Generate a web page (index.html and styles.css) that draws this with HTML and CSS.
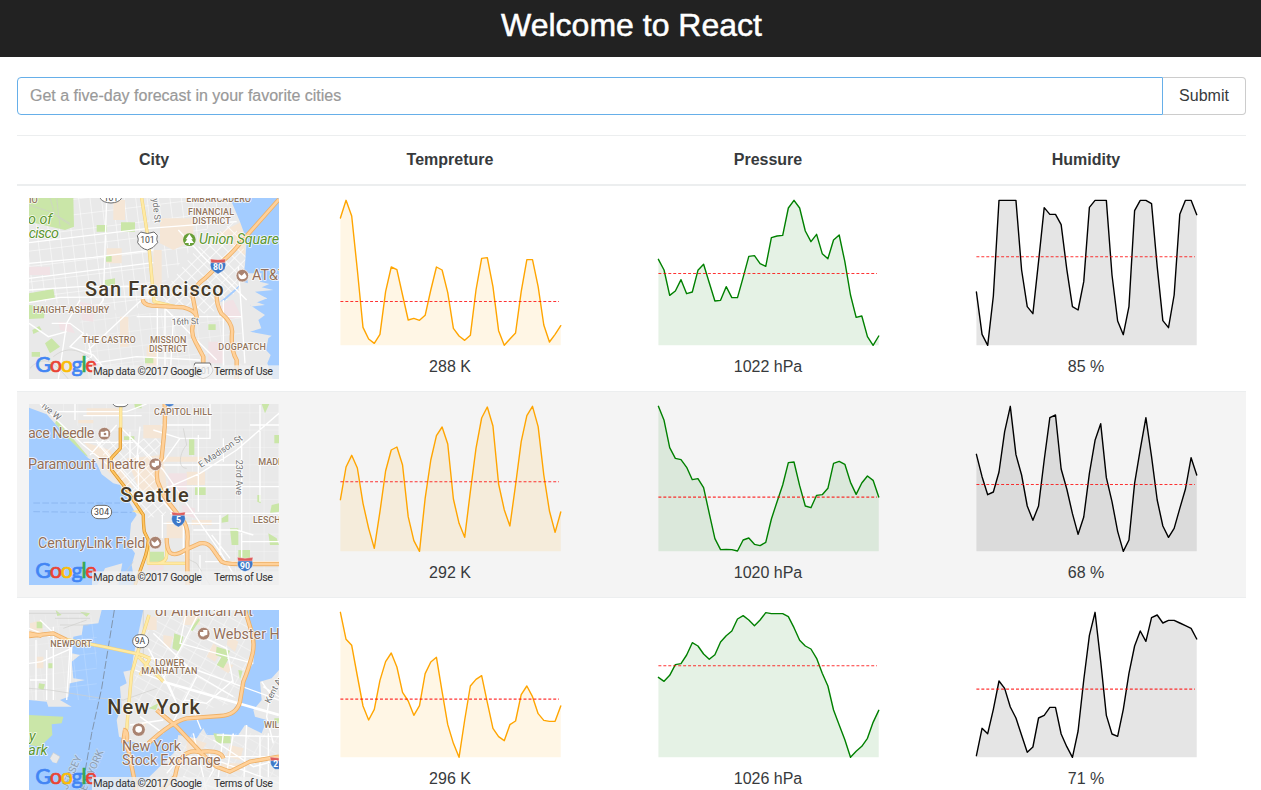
FILE: index.html
```html
<!DOCTYPE html>
<html lang="en">
<head>
<meta charset="utf-8">
<title>Welcome to React</title>
<link rel="stylesheet" href="styles.css">
</head>
<body>
<header class="banner"><h2 class="banner-title">Welcome to React</h2></header>
<main class="content">
<form class="search">
<input class="search-input" type="text" placeholder="Get a five-day forecast in your favorite cities">
<button class="search-button" type="button">Submit</button>
</form>
<section class="table">
<div class="row head"><div>City</div><div>Tempreture</div><div>Pressure</div><div>Humidity</div></div>

<div class="row">
<div class="cell">
<svg class="map" viewBox="27 24 750 543">
<defs>
<pattern id="blocks" width="34" height="46" patternUnits="userSpaceOnUse" patternTransform="rotate(-7)"><path d="M0 0H34M0 0V46" class="street thin"/></pattern>
<pattern id="diag" width="26" height="26" patternUnits="userSpaceOnUse" patternTransform="rotate(45)"><path d="M0 0H26M0 0V26" class="street"/></pattern>
</defs>
<rect x="27" y="24" width="750" height="543" class="land"/>
<path d="M27 24H385L400 330L330 365L27 330Z" fill="url(#blocks)"/>
<path d="M180 370H665V567H180Z" fill="url(#blocks)" opacity=".55"/>
<path d="M395 24H640L560 120L400 320Z" fill="url(#blocks)"/>
<g class="commercial"><path d="M420 85H520V150L460 180L420 160ZM280 30H315V90H280ZM260 175H305V220H260ZM300 380H325V470H300ZM555 150L665 95L680 220L620 280L555 215ZM400 180H425V290H400ZM380 470H410V530H380Z"/></g>
<g class="hospital"><path d="M28 230H90V255H28ZM180 335L225 345L220 395L185 390ZM590 335L640 330L665 380L620 390ZM565 455H610V520H565ZM115 395L150 400L165 430L120 420Z"/></g>
<path d="M410 330L535 170L575 130L680 200L665 300L570 375Z" class="land"/>
<path d="M410 330L535 170L640 95L680 200L655 300L570 375Z" fill="url(#diag)"/>
<g class="park"><path d="M27 24H160L162 110L135 120L27 95ZM27 310L100 297L105 325L27 335ZM27 345L75 350L72 385L27 387ZM230 105H260V125H230ZM303 97H345V125H303ZM258 198H275V215H258ZM255 270L285 265V285L255 290ZM95 445L120 470L90 490L75 460ZM37 420L58 408L65 420L40 432ZM565 403H587V420H565ZM35 486H60V500H35ZM375 503H400V520H375Z"/></g>
<path d="M27 45L90 65L150 100M90 24L105 75L150 105M110 24L120 110" class="trail"/>
<path d="M630 24H777V567H758L742 520L752 495L738 480L745 445L755 437L690 425L724 415L715 390L735 375L690 345L742 325L700 310L705 285L668 275L675 225L680 150L660 95Z" class="water"/>
<path d="M680 250L725 250L720 275L748 282L725 292L760 300L705 305L742 326L690 330L735 345L692 350Z" class="land"/>
<path d="M600 335L662 283L650 300L613 332Z" class="water"/>
<g class="street"><path d="M27 158L385 115L650 95M27 220L220 202L400 180M27 265L400 218M27 300L180 290L400 290M27 338L120 322L400 320M260 24L250 330L235 350M370 325L205 480M180 330L140 400L115 567M350 380H665M95 400L150 400L190 430L150 470L220 495L280 567M400 320L590 510M215 520L350 500L540 510M412 345V567M435 350V567M475 120L550 200L680 330M655 230L675 520M27 400L85 440L140 425M200 430L215 500L180 520M610 330V567M460 390L450 567"/></g>
<g class="trail"><path d="M100 500C160 450 220 500 260 567M30 535C80 480 120 540 145 567"/></g>
<g class="arterial-edge"><path d="M365 24L385 150L402 335L465 350"/></g><g class="arterial"><path d="M365 24L385 150L402 335L465 350"/></g>
<g class="highway-edge"><path d="M777 28L653 168Q640 185 615 207L555 265Q520 290 518 320L530 380Q505 420 526 455L550 500V567M368 328Q370 345 395 347L490 352Q520 360 528 375M590 318Q590 345 604 370Q640 400 636 430Q632 480 650 510V567"/></g>
<g class="highway"><path d="M777 28L653 168Q640 185 615 207L555 265Q520 290 518 320L530 380Q505 420 526 455L550 500V567M368 328Q370 345 395 347L490 352Q520 360 528 375M590 318Q590 345 604 370Q640 400 636 430Q632 480 650 510V567"/></g>
<g class="route"><path d="M362 126Q382 135 402 126L412 136Q408 149 413 158Q400 176 382 180Q364 176 353 158Q357 148 352 137Z"/><path d="M250 10H295L304 26Q295 38 273 39Q250 38 241 26Z"/><path d="M525 519H570L579 540Q575 560 549 566Q522 558 517 540Z"/></g>
<g class="route-text"><text x="361" y="159" textLength="43">101</text><text x="251" y="32" textLength="43">101</text><text x="529" y="551" textLength="43">101</text></g>
<g class="shield"><path d="M573 215H615Q625 237 594 252Q563 237 573 215Z"/><path class="shield-top" d="M571 207L594 209L617 207L615 218H573Z"/><text x="579" y="240">80</text></g>
<g class="place"><text x="499" y="35" textLength="194">EMBARCADERO</text><text x="504" y="76" textLength="138">FINANCIAL</text><text x="517" y="102" textLength="115">DISTRICT</text><text x="39" y="368" textLength="229">HAIGHT-ASHBURY</text><text x="187" y="459" textLength="160">THE CASTRO</text><text x="390" y="459" textLength="109">MISSION</text><text x="387" y="486" textLength="115">DISTRICT</text><text x="595" y="480" textLength="143">DOGPATCH</text><text x="27" y="39">IO</text></g>
<g class="road-name"><text x="455" y="405" textLength="82" transform="rotate(-2 455 405)">16th St</text><text x="397" y="26" transform="rotate(84 397 26)">yde St</text></g>
<g class="green-name"><text x="537" y="163" textLength="240">Union Square</text><text x="24" y="102">o of</text><text x="26" y="145" textLength="91">cisco</text></g>
<circle cx="508" cy="149" r="19" fill="#689f38"/><path d="M508 132L519 148H514L522 159H510V165H506V159H494L502 148H497Z" fill="#fff"/>
<g class="poi"><circle cx="667" cy="257" r="19"/><path class="poi-mark" d="M655 250L665 257L674 248L680 259Q678 268 665 268Q655 267 655 250Z"/><text x="696" y="270">AT&amp;T</text></g>
<text x="195" y="318" textLength="416" class="city">San Francisco</text>
<g class="credits"><text x="46" y="547" textLength="184" class="google"><tspan class="g-blue">G</tspan><tspan class="g-red">o</tspan><tspan class="g-yellow">o</tspan><tspan class="g-blue">g</tspan><tspan class="g-green">l</tspan><tspan class="g-red">e</tspan></text><rect x="216" y="526" width="561" height="41"/><text x="220" y="556" textLength="326">Map data ©2017 Google</text><text x="582" y="556" textLength="177">Terms of Use</text></g>
</svg></div>
<div class="cell"><svg class="chart" data-series="sf-temp"></svg><span>288 K</span></div>
<div class="cell"><svg class="chart" data-series="sf-pressure"></svg><span>1022 hPa</span></div>
<div class="cell"><svg class="chart" data-series="sf-humidity"></svg><span>85 %</span></div>
</div>

<div class="row striped">
<div class="cell">
<svg class="map" viewBox="27 27 750 543">
<defs><pattern id="sea-grid" width="43" height="52" patternUnits="userSpaceOnUse"><path d="M0 0H43M0 0V52" class="street thin"/></pattern>
<pattern id="sea-diag" width="23" height="27" patternUnits="userSpaceOnUse" patternTransform="rotate(48)"><path d="M0 0H23M0 0V27" class="street"/></pattern></defs>
<rect x="27" y="27" width="750" height="543" class="land"/>
<path d="M110 27H777V110H300L200 120ZM430 110H777V570H520L430 250Z" fill="url(#sea-grid)" opacity=".45"/>
<g class="commercial"><path d="M200 40H300V60H200ZM190 140L270 165L340 280L290 260ZM320 190L430 180L440 280L360 290ZM430 185H550V200H430ZM440 380H490V430H440ZM500 230H555V270H500ZM515 375H575V390H515ZM370 90H425V130H370ZM175 75H220V85H175Z"/></g>
<g class="hospital"><path d="M445 235H500V290H445ZM485 330L525 340V370L490 360ZM385 500H430V525H385Z"/></g>
<path d="M225 135L430 130L400 210L440 360L385 370L265 210Z" fill="url(#sea-diag)"/>
<g class="park"><path d="M312 124H343V135H312ZM507 133H523V180H507ZM725 27H748L735 55ZM763 120H777V145H763ZM605 370L625 357V380L605 383ZM712 300H722V325L712 320ZM755 330L777 325V350L750 355ZM630 400H655V450H635ZM390 470H432V500H390ZM655 465H690V490H655ZM525 275H557V300H525ZM745 415L770 430L777 450L750 450ZM343 27H365V40H345ZM110 75L150 120L205 185L180 175L105 85Z"/></g>
<path d="M27 38L80 58L140 125L205 190L230 205L245 238L280 265L300 270L330 325L350 360L333 385L327 450L345 475L335 510L345 570H295L307 505L255 520L232 570H27Z" class="water"/>
<path d="M335 348L365 343L362 358ZM335 350L300 353" class="ferry-land"/>
<path d="M40 324H300M40 350L205 352M275 352H335" class="ferry"/>
<g class="street"><path d="M60 27L190 150L265 210M110 50H320L380 27M190 62H365M165 27V75M190 142H340M230 142L375 310M290 90L210 180M300 95L430 225L600 470L660 570M330 110V200M400 105L480 130H570V27M425 90H570M360 95L350 200M480 130L430 200M777 55L650 165L540 235L370 310M665 125V570M430 210H650M440 275H777M450 355H777M430 385H600M600 360V480M535 120V350M720 30V320M665 440H777M400 285L460 355L520 355M427 360V430M490 380V480M540 480V570M520 405H650L700 420M555 500H777M355 180V330M690 90H777M610 130V200M575 420L630 490M680 490V570M655 500L700 570"/></g>
<path d="M500 220C470 220 480 170 500 150L490 100M570 570L530 505L500 490M290 570L340 500" class="trail"/>
<g class="arterial-edge"><path d="M302 27V110M385 450V505H500M440 430V480Q440 500 415 505"/></g><g class="arterial"><path d="M302 27V110M385 450V505H500M440 430V480Q440 500 415 505"/></g>
<g class="highway-edge"><path d="M434 27Q437 80 431 130L425 190Q405 220 413 260L430 300Q450 330 484 370Q507 395 502 440V520L503 570M440 430Q440 460 450 473Q465 485 495 465L540 445Q565 440 580 465L605 500Q620 508 660 507H777"/></g>
<g class="highway"><path d="M434 27Q437 80 431 130L425 190Q405 220 413 260L430 300Q450 330 484 370Q507 395 502 440V520L503 570M440 430Q440 460 450 473Q465 485 495 465L540 445Q565 440 580 465L605 500Q620 508 660 507H777"/></g>
<g class="trunk-edge"><path d="M301 98V160L273 190L275 225L310 270L370 360Q370 390 373 410L385 435Q382 470 372 495L345 570"/></g><g class="trunk"><path d="M301 98V160L273 190L275 225L310 270L370 360Q370 390 373 410L385 435Q382 470 372 495L345 570"/></g>
<g class="route"><rect x="214" y="331" width="61" height="40" rx="20"/><rect x="278" y="10" width="47" height="25" rx="16"/></g><text x="222" y="360" textLength="45" class="route-text">304</text>
<g class="shield"><path d="M457 360H494Q502 384 475 396Q448 384 457 360Z"/><path class="shield-top" d="M455 351L475 354L496 351L494 361H457Z"/><text x="468" y="385">5</text><path d="M654 497H697Q705 520 675 530Q646 520 654 497Z"/><path class="shield-top" d="M652 487L675 490L699 487L697 498H654Z"/><text x="660" y="522">90</text><path d="M434 27H462Q460 33 448 35Q438 34 434 27Z"/></g>
<g class="place"><text x="402" y="59" textLength="174">CAPITOL HILL</text><text x="715" y="209">MADRONA</text><text x="699" y="383">LESCHI</text></g>
<g class="road-name"><text x="543" y="219" textLength="153" transform="rotate(-34 543 219)">E Madison St</text><text x="649" y="194" textLength="106" transform="rotate(90 649 194)">23rd Ave</text><text x="64" y="36" transform="rotate(40 64 36)">ive W</text></g>
<g class="poi"><circle cx="253" cy="116" r="19"/><path class="poi-mark" d="M242 110H254L257 107H262L265 110V125H242Z"/><circle class="poi-lens" cx="255" cy="117" r="4"/><circle cx="406" cy="208" r="19"/><path class="poi-mark" d="M395 203H408V216Q400 219 395 211ZM404 197H417V211L408 214Z"/><circle cx="406" cy="443" r="19"/><path class="poi-mark" d="M394 436L404 443L413 434L419 445Q417 454 404 454Q394 453 394 436Z"/><text x="24" y="130" textLength="199">ace Needle</text><text x="24" y="222" textLength="353">Paramount Theatre</text><text x="54" y="459" textLength="322">CenturyLink Field</text></g>
<text x="300" y="320" textLength="206" class="city">Seattle</text>
<g transform="translate(0 3)" class="credits"><text x="46" y="547" textLength="184" class="google"><tspan class="g-blue">G</tspan><tspan class="g-red">o</tspan><tspan class="g-yellow">o</tspan><tspan class="g-blue">g</tspan><tspan class="g-green">l</tspan><tspan class="g-red">e</tspan></text><rect x="216" y="526" width="561" height="41"/><text x="220" y="556" textLength="326">Map data ©2017 Google</text><text x="582" y="556" textLength="177">Terms of Use</text></g>
</svg></div>
<div class="cell"><svg class="chart" data-series="sea-temp"></svg><span>292 K</span></div>
<div class="cell"><svg class="chart" data-series="sea-pressure"></svg><span>1020 hPa</span></div>
<div class="cell"><svg class="chart" data-series="sea-humidity"></svg><span>68 %</span></div>
</div>

<div class="row">
<div class="cell">
<svg class="map" viewBox="27 30 750 543">
<defs><pattern id="ny-grid" width="38" height="29" patternUnits="userSpaceOnUse" patternTransform="rotate(29)"><path d="M0 0H38M0 0V29" class="street thin"/></pattern></defs>
<rect x="27" y="30" width="750" height="543" class="water"/>
<path d="M27 30H245L235 70L190 75L185 105L160 110L155 160L180 165L155 185L160 235L195 240L150 250L145 290L120 300L155 320H85L80 305L27 300Z" class="land"/>
<path d="M370 30H675L690 70L705 145L700 190L665 245L655 310L625 345L530 360L455 365L385 435L335 425L297 410L290 360L305 320L300 260L320 250L310 215L335 210L340 170Z" class="land"/>
<path d="M777 210L755 235L720 245L725 300L700 330L705 350L740 360L725 400L675 375L655 405H560L550 385L530 415L475 405L465 455L345 573H777Z" class="land"/>
<path d="M390 30H675L700 150L640 310L450 350L340 310L345 180Z" fill="url(#ny-grid)" opacity=".8"/><path d="M480 400L777 400V573H400Z" fill="url(#ny-grid)" opacity=".55"/>
<path d="M27 45H230V300H27Z" fill="url(#blocks)" opacity=".3"/>
<g class="commercial"><path d="M380 50H410V90H380ZM490 45H540V75H490ZM430 105L460 110L450 145L430 135ZM580 130L605 150L585 185L560 170ZM625 105L655 125L645 155L620 135ZM600 185L640 195L625 220L600 205ZM30 70L65 60L70 100L30 110ZM100 115H155V130H100ZM345 370L380 365L370 405L345 400ZM500 410L560 430L540 460L500 450ZM630 435L670 445L660 480L620 470ZM50 170H70V205H50ZM605 490H660V515H605Z"/></g>
<g class="park"><path d="M27 345L130 350L125 370L95 373L97 405L60 440L27 435ZM463 100L490 110L478 155L457 145ZM590 140L630 152L620 178L587 165ZM605 170L625 178L610 205L590 195ZM50 65H67V85H50ZM107 30L125 45L112 48ZM180 35L210 40L200 50ZM510 90L518 93L540 60L535 55ZM385 325L415 310L408 330ZM57 250L75 253L70 270L55 265ZM85 190H98V205H85ZM655 210L668 212L660 240ZM580 400L632 405V430H590ZM763 355H777V370H763Z"/></g>
<path d="M90 475L100 458L120 470L110 490L98 487Z" class="land"/><path d="M90 475L100 458L120 470L110 490" class="trail"/>
<path d="M370 455L410 440L400 500L380 495Z" class="water"/>
<g class="street"><path d="M27 190L65 185L155 145M100 80V300M60 60L150 145L140 300M27 85L90 110M80 150V300M155 140L150 250M30 240L80 240M48 120V300M345 210L445 250L470 310M350 170L440 180L530 210L777 300M430 235L490 130L540 30M470 310L420 210L385 145M400 100L530 225L640 290M500 30L480 130L700 190M520 330L543 388M565 450L580 510L545 573M590 405L777 410M520 400L560 573M680 375L670 573M580 420L700 500L777 480M610 400L590 573M430 573L500 470H777M530 230L460 365L385 430M330 375L430 360M545 110L620 145L640 250M725 245L750 280L740 350L760 430M495 300L560 310L640 240M490 460L440 520M640 400L620 520M730 260L777 290M560 470L777 550M490 530L600 570M720 410V573M745 400V573M360 350L430 400"/></g>
<path d="M27 265L90 270L245 295L310 300L410 265M105 55H210M120 75H205M27 40H200M130 85L200 60M370 30V200" class="trail"/>
<path d="M283 30L245 265L215 400L185 573" class="border"/>
<g class="arterial-edge"><path d="M120 115L250 140L360 163L390 175M387 45L370 100L335 220L323 350L320 390M355 170L430 245M390 175L360 225"/></g><g class="arterial"><path d="M120 115L250 140L360 163L390 175M387 45L370 100L335 220L323 350L320 390M355 170L430 245M390 175L360 225"/></g>
<path d="M430 245L777 345" class="bridge"/>
<g class="highway-edge"><path d="M675 30L690 80Q706 120 698 160Q685 210 670 245L660 305Q650 345 600 348L500 355Q455 365 385 430M27 100L65 108M27 108L100 100L140 120M315 390L310 425L325 450L350 573M310 390Q325 390 320 425M410 330L470 380L545 460M777 470L690 485L630 515L590 500L540 457Q480 440 465 530L420 573M545 455Q605 450 610 475"/></g>
<g class="highway"><path d="M675 30L690 80Q706 120 698 160Q685 210 670 245L660 305Q650 345 600 348L500 355Q455 365 385 430M27 100L65 108M27 108L100 100L140 120M315 390L310 425L325 450L350 573M310 390Q325 390 320 425M410 330L470 380L545 460M777 470L690 485L630 515L590 500L540 457Q480 440 465 530L420 573M545 455Q605 450 610 475"/></g>
<g class="route"><rect x="338" y="104" width="48" height="39" rx="20"/></g><text x="344" y="132" class="route-text">9A</text>
<g class="shield"><path d="M752 480H790V508H765Q748 495 752 480Z"/><path class="shield-top" d="M750 471L777 474V482H752Z"/><text x="760" y="501">2</text></g>
<g class="place"><text x="91" y="140" textLength="125">NEWPORT</text><text x="405" y="197" textLength="88">LOWER</text><text x="364" y="223" textLength="168">MANHATTAN</text><text x="732" y="383">WILLIAMS</text></g>
<g class="road-name"><text x="749" y="312" transform="rotate(-62 749 312)">Kent Ave</text><text x="142" y="571" class="region" transform="rotate(-66 142 571)">JERSEY</text><text x="189" y="595" class="region" transform="rotate(-66 189 595)">NEW YORK</text></g>
<g class="green-name"><text x="27" y="422">y</text><text x="25" y="464">ark</text></g>
<g class="poi"><circle cx="551" cy="101" r="19"/><path class="poi-mark" d="M540 96H553V109Q545 112 540 104ZM549 90H562V104L553 107Z"/><circle cx="356" cy="389" r="20"/><circle class="poi-mark" cx="356" cy="388" r="10"/><text x="405" y="48" textLength="294">of American Art</text><text x="580" y="116">Webster Hall</text><text x="306" y="452" textLength="177">New York</text><text x="306" y="494" textLength="296">Stock Exchange</text></g>
<text x="262" y="341" textLength="278" class="city">New York</text>
<g transform="translate(0 5)" class="credits"><text x="46" y="547" textLength="184" class="google"><tspan class="g-blue">G</tspan><tspan class="g-red">o</tspan><tspan class="g-yellow">o</tspan><tspan class="g-blue">g</tspan><tspan class="g-green">l</tspan><tspan class="g-red">e</tspan></text><rect x="216" y="526" width="561" height="45"/><text x="220" y="556" textLength="326">Map data ©2017 Google</text><text x="582" y="556" textLength="177">Terms of Use</text></g>
</svg></div>
<div class="cell"><svg class="chart" data-series="ny-temp"></svg><span>296 K</span></div>
<div class="cell"><svg class="chart" data-series="ny-pressure"></svg><span>1026 hPa</span></div>
<div class="cell"><svg class="chart" data-series="ny-humidity"></svg><span>71 %</span></div>
</div>
</section>
</main>
<script src="charts.js"></script>
</body>
</html>
```
FILE: styles.css
```css
* { box-sizing: border-box; }
html, body { height: 100%; overflow: hidden; }
body { margin: 0; background: #fff; color: #373a3c; font: 16px/24px "Liberation Sans", Arial, sans-serif; }
.banner { height: 57px; background: #222; color: #fff; text-align: center; }
.banner-title { margin: 0; padding: 6px 0 0 2px; font-size: 32px; line-height: 38px; font-weight: 400; -webkit-text-stroke: .5px #fff; }
.content { padding: 20px 15px 0 17px; }
.search { display: flex; height: 38px; margin-bottom: 20px; }
.search-input { flex: 1; min-width: 0; padding: 0 12px; border: 1px solid #66afe9; border-radius: 4px 0 0 4px; font: inherit; outline: none; }
.search-input::placeholder { color: #999; opacity: 1; -webkit-text-stroke: .2px #999; }
.search-button { width: 83px; padding: 0; border: 1px solid #ccc; border-left: 0; border-radius: 0 4px 4px 0; background: #fff; color: #373a3c; font: inherit; }
.row { display: grid; grid-template-columns: 274px 318px 318px 318px; height: 206px; padding-top: 12px; border-top: 1px solid #eceeef; text-align: center; }
.head { height: 50px; font-weight: 700; }
.head + .row { box-shadow: 0 -1px #eceeef; }
.striped { background: #f4f4f4; }
.cell { display: flex; flex-direction: column; align-items: center; }
.map { display: block; width: 250px; height: 181px; font-family: Roboto, sans-serif; overflow: hidden; }
.chart { width: 224px; height: 150px; margin-bottom: 7px; }
.chart .line { fill: none; stroke-width: 1.4; stroke-linejoin: round; stroke-linecap: round; }
.chart .area { fill-opacity: .1; }
.chart .mean { stroke: red; stroke-opacity: .8; stroke-width: 1.1; stroke-dasharray: 2.95 2; }

.land { fill: #e9e9e9; }
.water { fill: #a3ccff; }
.park { fill: #cae6a8; }
.commercial { fill: #f5e6d6; }
.hospital { fill: #f1e2e5; }
.street { fill: none; stroke: #fff; stroke-width: 4; }
.thin { stroke-width: 3; }
.bridge { fill: none; stroke: #fff; stroke-width: 8; }
.trail { fill: none; stroke: #cfcfcb; stroke-width: 2; }
.border { fill: none; stroke: #8195ad; stroke-width: 3; stroke-dasharray: 24 7; }
.ferry { fill: none; stroke: #82aeea; stroke-width: 2; stroke-dasharray: 20 7; }
.ferry-land { fill: #ffe4a0; }
.arterial-edge, .highway-edge, .trunk-edge { fill: none; stroke-linejoin: round; }
.arterial-edge { stroke: #f0d27c; stroke-width: 10; }
.arterial { fill: none; stroke: #ffeaa3; stroke-width: 7; stroke-linejoin: round; }
.highway-edge { stroke: #eeb067; stroke-width: 13; }
.highway { fill: none; stroke: #ffd19a; stroke-width: 8; stroke-linejoin: round; }
.trunk-edge { stroke: #d79227; stroke-width: 10; }
.trunk { fill: none; stroke: #ffc461; stroke-width: 6; stroke-linejoin: round; }
.route { fill: #fff; stroke: #6c6c6c; stroke-width: 3; }
.route-text { font-size: 26px; fill: #444; }
.shield { fill: #3d78c8; stroke: #fff; stroke-width: 1; }
.shield-top { fill: #dd5b5b; }
.shield text { font-size: 26px; font-weight: 700; fill: #fff; stroke: none; }
.place, .road-name, .green-name, .poi text, .city { paint-order: stroke; stroke: #fff; stroke-opacity: .85; stroke-width: 5px; stroke-linejoin: round; }
.place { font-size: 27px; font-weight: 500; fill: #92755b; }
.road-name { font-size: 27px; fill: #737373; }
.road-name .region { font-size: 31px; fill: #8d9eb2; stroke: #c6dcf6; }
.green-name { font-size: 43px; font-style: italic; font-weight: 400; fill: #5c9630; }
.poi { fill: #a98371; }
.poi circle { stroke: #fff; stroke-width: 2; }
.poi .poi-mark { fill: #fff; stroke: none; }
.poi .poi-lens { stroke: none; }
.poi text { font-size: 43px; fill: #946f58; }
.city { font-size: 60px; font-weight: 500; fill: #453a29; }
.credits text { font-size: 32px; fill: #333; }
.credits rect { fill: #f1f1f1; fill-opacity: .78; }
.credits .google { font-family: Lato, sans-serif; font-size: 65px; font-weight: 400; stroke-width: 2px; }
.google .g-blue { fill: #4285f4; stroke: #4285f4; }
.google .g-red { fill: #ea4335; stroke: #ea4335; }
.google .g-yellow { fill: #fbbc05; stroke: #fbbc05; }
.google .g-green { fill: #34a853; stroke: #34a853; }
```
FILE: charts.js
```javascript
// Each series: line colour, top offset, mean level, then forty samples (3 units per pixel).
const series = {
  'sf-temp': ['orange', 8, 334, [84,31,78,240,412,447,460,433,305,231,239,315,390,385,391,376,300,231,240,308,415,438,451,436,300,205,203,290,422,466,447,429,305,209,209,290,405,456,433,407]],
  'sf-pressure': ['green', 8, 250, [208,240,316,303,269,311,306,241,223,278,333,331,290,323,323,262,199,197,221,229,143,138,136,54,31,54,123,155,133,191,206,150,135,215,315,382,378,440,466,438]],
  'sf-humidity': ['black', 8, 200, [306,433,466,318,31,31,31,31,240,350,371,215,53,73,73,104,238,350,360,275,52,31,31,31,255,393,434,350,62,31,31,41,230,392,413,315,73,31,31,74]],
  'sea-temp': ['orange', 9, 260, [314,216,181,219,325,400,460,350,228,165,156,210,365,437,469,310,195,122,96,147,312,385,427,290,160,69,36,93,267,344,393,270,140,62,34,95,240,348,412,351]],
  'sea-pressure': ['green', 9, 306, [34,76,158,190,194,217,254,251,278,355,431,464,463,464,468,435,429,448,452,442,372,320,270,203,201,272,333,338,301,299,280,205,199,208,262,298,264,243,256,306]],
  'sea-humidity': ['black', 9, 268, [178,245,299,291,231,110,34,179,240,333,376,333,195,68,60,222,282,356,418,366,235,136,86,248,320,409,469,435,265,163,68,185,315,393,427,400,340,282,188,240]],
  'ny-temp': ['orange', 10, 297, [37,118,136,228,318,360,328,241,185,159,201,277,303,346,317,221,186,172,275,374,430,472,360,258,238,227,307,385,410,422,374,363,284,258,290,341,361,364,364,318]],
  'ny-pressure': ['green', 10, 197, [232,244,226,194,191,165,128,138,162,178,164,126,107,93,57,47,60,77,60,38,41,41,41,50,83,121,138,147,175,220,258,330,375,419,472,454,439,415,367,331]],
  'ny-humidity': ['black', 10, 267, [467,385,401,328,243,265,321,354,406,457,441,354,346,322,322,402,440,472,393,240,106,37,184,346,402,409,328,220,138,93,124,53,45,69,61,61,69,77,85,117]]
};

document.querySelectorAll('.chart').forEach((svg) => {
  const [color, offset, mean, values] = series[svg.dataset.series];
  const points = values.map((v, i) => `${(2.4 + i * 5.65).toFixed(2)},${(v / 3 - offset).toFixed(2)}`).join(' ');
  const level = (mean / 3 - offset + 0.1).toFixed(2);
  svg.setAttribute('viewBox', '0 0 224 150');
  svg.innerHTML = `<polygon class="area" fill="${color}" points="2.4,147.3 ${points} 222.75,147.3"/>
    <polyline class="line" stroke="${color}" points="${points}"/>
    <line class="mean" x1="2.4" x2="221" y1="${level}" y2="${level}"/>`;
});
```
